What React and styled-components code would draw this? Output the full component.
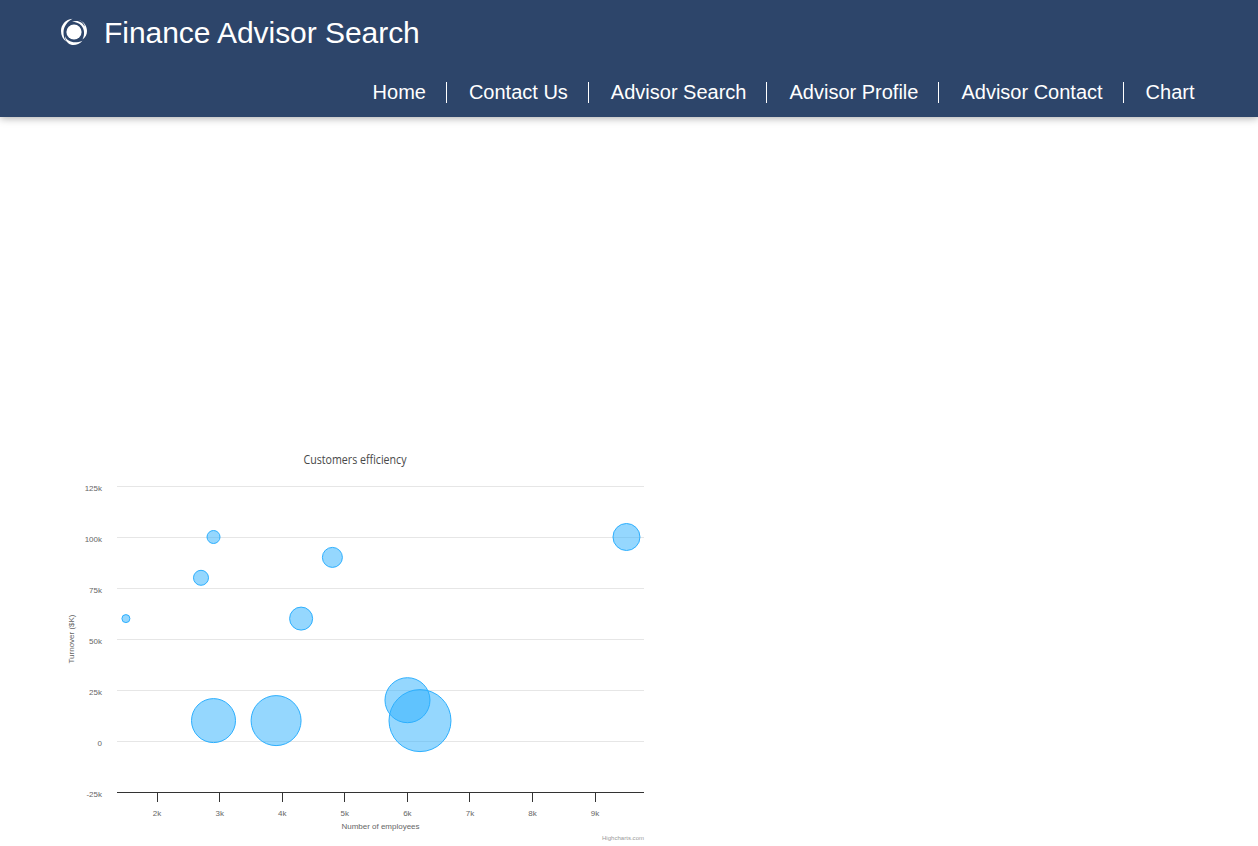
import React from "react";
import styled, { createGlobalStyle } from "styled-components";

const GlobalStyle = createGlobalStyle`
  * { box-sizing: border-box; }
  body {
    margin: 0;
    background: #fff;
    font-family: "Liberation Sans", Arial, Helvetica, sans-serif;
    overflow: hidden;
  }
`;

const Page = styled.div`
  display: flex;
  flex-direction: column;
  height: 846px;
`;

const Header = styled.header`
  flex: none;
  height: 117px;
  padding: 14px 63.5px 0 60px;
  background: #2d456a;
  color: #fff;
  box-shadow: 0 1px 8px rgba(0, 0, 0, 0.35);
`;

const Brand = styled.div`
  display: flex;
  align-items: center;
  height: 36px;
  gap: 16px;
`;

const Logo = styled.svg`
  width: 28px;
  height: 28px;
  flex: none;
`;

const BrandName = styled.h1`
  margin: 0;
  padding-top: 1px;
  font-size: 30px;
  font-weight: 400;
  line-height: 36px;
  letter-spacing: -0.05px;
  white-space: nowrap;
`;

const Nav = styled.nav`
  display: flex;
  justify-content: flex-end;
  margin-top: 32px;
`;

const NavLink = styled.a`
  height: 21px;
  padding: 0 20px 0 22px;
  border-right: 1px solid #fff;
  font-size: 20px;
  line-height: 21px;
  white-space: nowrap;

  &:last-child {
    padding-right: 0;
    border-right: 0;
  }
`;

const Content = styled.main`
  flex: 1;
  display: flex;
  align-items: flex-end;
  padding-left: 60px;
`;

const Chart = styled.svg`
  display: block;
  width: 600px;
  height: 406px;
`;

const Title = styled.text`
  font: 400 12px "Open Sans", "Noto Sans", sans-serif;
  fill: #484848;
`;

const AxisText = styled.text`
  font-size: ${(p) => p.$size || 8}px;
  fill: ${(p) => p.$color || "#666"};
`;

const GridLine = styled.path`
  stroke: #e6e6e6;
`;

const AxisLine = styled.path`
  stroke: #333;
`;

const Bubble = styled.circle`
  fill: #2caffe;
  fill-opacity: 0.5;
  stroke: #2caffe;
`;

const links = ["Home", "Contact Us", "Advisor Search", "Advisor Profile", "Advisor Contact", "Chart"];

const yTicks = ["125k", "100k", "75k", "50k", "25k", "0", "-25k"];
const xTicks = [2, 3, 4, 5, 6, 7, 8, 9];

const bubbles = [
  { x: 1.5, y: 60, r: 4 },
  { x: 2.7, y: 80, r: 7.5 },
  { x: 2.9, y: 100, r: 6.5 },
  { x: 4.8, y: 90, r: 10 },
  { x: 4.3, y: 60, r: 11.5 },
  { x: 9.5, y: 100, r: 13.5 },
  { x: 2.9, y: 10, r: 22 },
  { x: 3.9, y: 10, r: 25 },
  { x: 6.2, y: 10, r: 31 },
  { x: 6, y: 20, r: 22.5 },
];

const scaleX = (k) => 97.1 + (k - 2) * 62.57;
const scaleY = (k) => 301 - k * 2.04;

function BubbleChart() {
  return (
    <Chart viewBox="0 0 600 406">
      <Title x="243.5" y="24" textLength="103" lengthAdjust="spacingAndGlyphs">Customers efficiency</Title>
      {yTicks.map((label, i) => (
        <React.Fragment key={label}>
          {i < 6 && <GridLine d={`M57 ${46.5 + i * 51}H584`} />}
          <AxisText x="42" y={51 + i * 51} textAnchor="end">{label}</AxisText>
        </React.Fragment>
      ))}
      <AxisLine d="M57 352.5H584" />
      {xTicks.map((k) => (
        <React.Fragment key={k}>
          <AxisLine d={`M${Math.floor(scaleX(k)) + 0.5} 352V362`} />
          <AxisText x={scaleX(k)} y="376" textAnchor="middle">{k}k</AxisText>
        </React.Fragment>
      ))}
      {bubbles.map((b) => (
        <Bubble key={`${b.x}-${b.y}`} cx={scaleX(b.x) + 0.1} cy={scaleY(b.y)} r={b.r} />
      ))}
      <AxisText x="320.5" y="389" textAnchor="middle" textLength="78">Number of employees</AxisText>
      <AxisText transform="translate(14 199) rotate(-90)" textAnchor="middle" textLength="49">Turnover ($K)</AxisText>
      <AxisText x="584" y="400" textAnchor="end" textLength="42" $size={6} $color="#999">Highcharts.com</AxisText>
    </Chart>
  );
}

export default function App() {
  return (
    <Page>
      <GlobalStyle />
      <Header>
        <Brand>
          <Logo viewBox="0 0 28 28" fill="#fff">
            <circle cx="14" cy="14" r="7.6" />
            <path d="M12.5 .8C5.500 1.500 1 7 1 13C1 17.500 3 21.500 6.500 23.800C4.300 21 3.300 17.500 3.500 14C3.800 8.500 7 3.800 12.500 .8Z" />
            <path d="M12 3.700C17.500 1.500 22.500 4 24.500 8.500C25 6.500 22.500 3.500 19 2C24 3.500 27 8 27 13C27 16.500 25.500 19.500 22.500 21.500C25 16.500 24.500 11 21.300 7.500C18.800 4.800 15.500 3.800 12 3.700Z" />
            <path d="M5 18C7 23.800 14.500 26 22.500 22.700C18 27.800 11.500 28.200 8 25C5.800 23.200 5 20.800 5 18Z" />
          </Logo>
          <BrandName>Finance Advisor Search</BrandName>
        </Brand>
        <Nav>
          {links.map((label) => (
            <NavLink key={label}>{label}</NavLink>
          ))}
        </Nav>
      </Header>
      <Content>
        <BubbleChart />
      </Content>
    </Page>
  );
}
